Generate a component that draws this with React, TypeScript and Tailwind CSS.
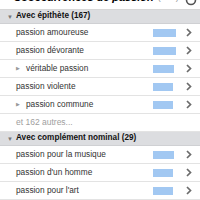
import React from "react";

type Row = { label: string; bar: number; sub?: boolean };

const groups: { title: string; rows: Row[]; more?: string }[] = [
  {
    title: "Avec épithète (167)",
    rows: [
      { label: "passion amoureuse", bar: 23 },
      { label: "passion dévorante", bar: 23 },
      { label: "véritable passion", bar: 21, sub: true },
      { label: "passion violente", bar: 20 },
      { label: "passion commune", bar: 20, sub: true },
    ],
    more: "et 162 autres...",
  },
  {
    title: "Avec complément nominal (29)",
    rows: [
      { label: "passion pour la musique", bar: 21 },
      { label: "passion d'un homme", bar: 20 },
      { label: "passion pour l'art", bar: 20 },
    ],
  },
];

function Chevron() {
  return (
    <svg width="6" height="9" viewBox="0 0 6 9" className="shrink-0">
      <path d="M1 1 L4.5 4.5 L1 8" fill="none" stroke="#6b6b6b" strokeWidth="1.7" />
    </svg>
  );
}

export default function App() {
  return (
    <div className="w-[200px] h-[200px] overflow-hidden bg-white text-[#333] font-['Liberation_Sans',Arial,sans-serif]">
      {/* title, cut off at the top */}
      <div className="h-[10px] overflow-hidden relative border-b border-[#d6d6d6]">
        <div className="absolute -top-[8px] left-0 right-0 flex items-center justify-center gap-1 pr-2">
          <span className="text-[11px] font-bold text-black leading-none">Cooccurrences de <i>passion</i></span>
          <span className="text-[9px] text-[#999] leading-none">(###)</span>
        </div>
        <svg width="12" height="12" viewBox="0 0 12 12" className="absolute right-[3px] -top-[6px]">
          <circle cx="6" cy="6" r="4.5" fill="none" stroke="#555" strokeWidth="1.6" />
        </svg>
      </div>

      {groups.map((g) => (
        <div key={g.title}>
          <div className="h-[14px] bg-[#dcdde0] flex items-center border-b border-[#cfd0d3]">
            <span className="w-[16px] pl-[7px] text-[6px] text-[#777] leading-none">▼</span>
            <span className="text-[8.2px] font-bold text-[#111] leading-none">{g.title}</span>
          </div>
          {g.rows.map((r) => (
            <div key={r.label} className="h-[18px] flex items-center border-b border-[#e3e3e3] pl-[16px] pr-[8px]">
              {r.sub && <span className="text-[5px] text-[#999] w-[10px] leading-none">▶</span>}
              <span className="flex-1 text-[8.3px] leading-none text-[#333]">{r.label}</span>
              <div className="w-[23px] h-[8px] mr-[10px]">
                <div className="h-full bg-[#a2c8f2]" style={{ width: r.bar }} />
              </div>
              <Chevron />
            </div>
          ))}
          {g.more && (
            <div className="h-[18px] flex items-center border-b border-[#e3e3e3] pl-[16px]">
              <span className="text-[8.5px] leading-none text-[#a0a0a0]">{g.more}</span>
            </div>
          )}
        </div>
      ))}
    </div>
  );
}
